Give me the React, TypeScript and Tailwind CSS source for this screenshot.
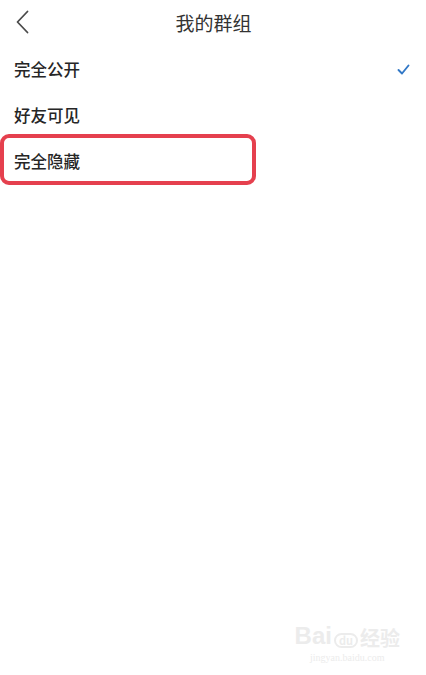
const FONT = { fontFamily: '"Noto Sans CJK SC", "Noto Sans", sans-serif' };

const ROWS = ["完全公开", "好友可见", "完全隐藏"];

export default function App() {
  return (
    <div className="relative h-[675px] w-[426px] overflow-hidden bg-white text-[#2b2b2b]" style={FONT}>
      <header className="relative flex h-[46px] items-center justify-center">
        <svg className="absolute left-[15px] top-[10px]" width="15" height="24" viewBox="0 0 15 24" fill="none">
          <path d="M12.5 1.5 L2.5 12 L12.5 22.5" stroke="#4a4a4a" strokeWidth="1.8" strokeLinecap="round" strokeLinejoin="round" />
        </svg>
        <h1 className="pl-[1px] text-[19px] font-normal text-[#333]">我的群组</h1>
      </header>

      <ul>
        {ROWS.map((label, i) => (
          <li key={label} className="relative flex h-[46px] items-center justify-between pl-[14px] pr-[16px]">
            <span className="text-[16.5px] font-medium text-[#262626]">{label}</span>
            {i === 0 && (
              <svg width="13" height="11" viewBox="0 0 13 11" fill="none">
                <path d="M1.5 6 L5 9.5 L11.5 1.5" stroke="#3278c6" strokeWidth="1.9" strokeLinecap="round" strokeLinejoin="round" />
              </svg>
            )}
            {i === 2 && (
              <div className="absolute -top-[4px] left-0 h-[51px] w-[256px] rounded-[9px] border-[4px] border-[#e5404e]" />
            )}
          </li>
        ))}
      </ul>

      <div className="absolute bottom-[10px] right-[26px] flex flex-col items-center text-[#ececec]">
        <div className="flex items-end gap-[2px] leading-none">
          <span className="text-[24px] font-bold" style={{ fontFamily: '"Liberation Sans", sans-serif' }}>Bai</span>
          <span className="rounded-full border-2 border-[#ececec] px-[3px] text-[11px] font-bold">du</span>
          <span className="text-[20px] font-bold">经验</span>
        </div>
        <span className="mt-[2px] text-[10px]" style={{ fontFamily: '"Liberation Serif", serif' }}>jingyan.baidu.com</span>
      </div>
    </div>
  );
}
